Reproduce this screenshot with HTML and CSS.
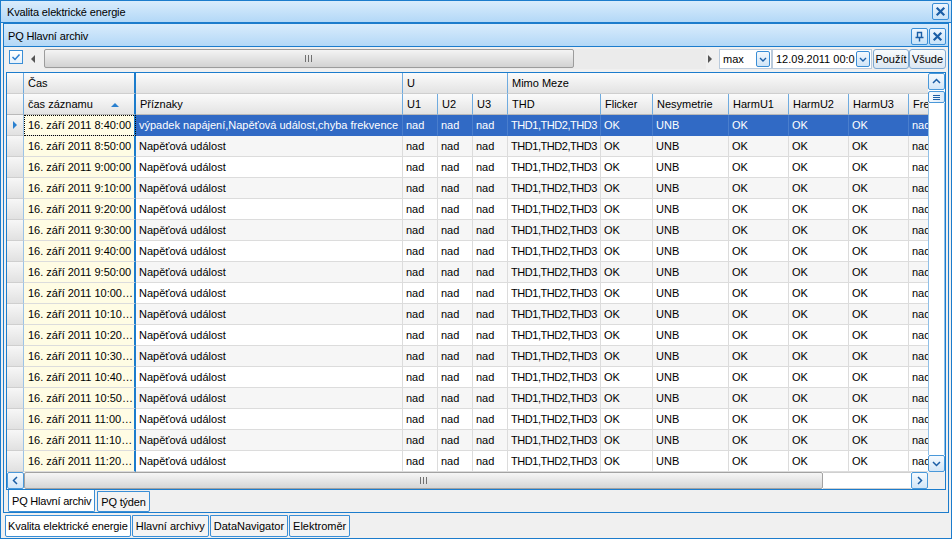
FILE: index.html
```html
<!DOCTYPE html>
<html lang="cs">
<head>
<meta charset="utf-8">
<title>Kvalita elektrické energie</title>
<link rel="stylesheet" href="styles.css">
</head>
<body>
<div class="app">
  <div class="titlebar">
    <span class="ttl">Kvalita elektrické energie</span>
    <span class="wbtn"><svg width="15" height="15" viewBox="0 0 15 15"><path d="M4.5 4.5l6 6M10.5 4.5l-6 6" stroke="#1b5ea6" stroke-width="2.2" stroke-linecap="square"/></svg></span>
  </div>
  <div class="win">
    <div class="wtitle">
      <span class="ttl">PQ Hlavní archiv</span>
      <span class="wbtns">
        <span class="wbtn"><svg width="15" height="15" viewBox="0 0 15 15"><path d="M5.5 3.5h4v5h-4z M3.5 8.5h8 M7.5 8.5v4" fill="none" stroke="#1b5ea6" stroke-width="1.4"/></svg></span>
        <span class="wbtn"><svg width="15" height="15" viewBox="0 0 15 15"><path d="M4.5 4.5l6 6M10.5 4.5l-6 6" stroke="#1b5ea6" stroke-width="2.2" stroke-linecap="square"/></svg></span>
      </span>
    </div>
    <div class="toolbar">
      <span class="chk"><svg width="12" height="12" viewBox="0 0 12 12"><path d="M2.5 6l2.5 2.5 4.5-5" fill="none" stroke="#2a7dd0" stroke-width="1.5"/></svg></span>
      <div class="tscroll">
        <span class="tarrow tl"></span>
        <div class="ttrack"><div class="tthumb"><span class="grip"></span></div></div>
        <span class="tarrow tr"></span>
      </div>
      <div class="combo c1"><span class="ctext">max</span><span class="cbtn"><svg width="12" height="13" viewBox="0 0 12 13"><path d="M3 5l3 3 3-3" fill="none" stroke="#1b5ea6" stroke-width="1.4"/></svg></span></div>
      <div class="combo c2"><span class="ctext">12.09.2011 00:0</span><span class="cbtn"><svg width="12" height="13" viewBox="0 0 12 13"><path d="M3 5l3 3 3-3" fill="none" stroke="#1b5ea6" stroke-width="1.4"/></svg></span></div>
      <span class="btn b1">Použít</span>
      <span class="btn b2">Všude</span>
    </div>
    <div class="grid">
      <div class="gbody">
        <div class="view">
          <div class="hrow h1">
            <div class="hc ind"></div>
            <div class="hc cas">Čas</div>
            <div class="hc"></div>
            <div class="hc s3">U</div>
            <div class="hc s7">Mimo Meze</div>
          </div>
          <div class="hrow h2">
            <div class="hc ind"></div>
            <div class="hc cas">čas záznamu<i class="sort"></i></div>
            <div class="hc">Příznaky</div>
            <div class="hc">U1</div>
            <div class="hc">U2</div>
            <div class="hc">U3</div>
            <div class="hc">THD</div>
            <div class="hc">Flicker</div>
            <div class="hc">Nesymetrie</div>
            <div class="hc">HarmU1</div>
            <div class="hc">HarmU2</div>
            <div class="hc">HarmU3</div>
            <div class="hc">Frekvence</div>
          </div>
          <div class="r sel"><div class="c ind"><i class="cur"></i></div><div class="c cas">16. září 2011 8:40:00</div><div class="c">výpadek napájení,Napěťová událost,chyba frekvence</div><div class="c">nad</div><div class="c">nad</div><div class="c">nad</div><div class="c thd">THD1,THD2,THD3</div><div class="c">OK</div><div class="c">UNB</div><div class="c">OK</div><div class="c">OK</div><div class="c">OK</div><div class="c">nad</div></div>
          <div class="r alt"><div class="c ind"></div><div class="c cas">16. září 2011 8:50:00</div><div class="c">Napěťová událost</div><div class="c">nad</div><div class="c">nad</div><div class="c">nad</div><div class="c thd">THD1,THD2,THD3</div><div class="c">OK</div><div class="c">UNB</div><div class="c">OK</div><div class="c">OK</div><div class="c">OK</div><div class="c">nad</div></div>
          <div class="r"><div class="c ind"></div><div class="c cas">16. září 2011 9:00:00</div><div class="c">Napěťová událost</div><div class="c">nad</div><div class="c">nad</div><div class="c">nad</div><div class="c thd">THD1,THD2,THD3</div><div class="c">OK</div><div class="c">UNB</div><div class="c">OK</div><div class="c">OK</div><div class="c">OK</div><div class="c">nad</div></div>
          <div class="r alt"><div class="c ind"></div><div class="c cas">16. září 2011 9:10:00</div><div class="c">Napěťová událost</div><div class="c">nad</div><div class="c">nad</div><div class="c">nad</div><div class="c thd">THD1,THD2,THD3</div><div class="c">OK</div><div class="c">UNB</div><div class="c">OK</div><div class="c">OK</div><div class="c">OK</div><div class="c">nad</div></div>
          <div class="r"><div class="c ind"></div><div class="c cas">16. září 2011 9:20:00</div><div class="c">Napěťová událost</div><div class="c">nad</div><div class="c">nad</div><div class="c">nad</div><div class="c thd">THD1,THD2,THD3</div><div class="c">OK</div><div class="c">UNB</div><div class="c">OK</div><div class="c">OK</div><div class="c">OK</div><div class="c">nad</div></div>
          <div class="r alt"><div class="c ind"></div><div class="c cas">16. září 2011 9:30:00</div><div class="c">Napěťová událost</div><div class="c">nad</div><div class="c">nad</div><div class="c">nad</div><div class="c thd">THD1,THD2,THD3</div><div class="c">OK</div><div class="c">UNB</div><div class="c">OK</div><div class="c">OK</div><div class="c">OK</div><div class="c">nad</div></div>
          <div class="r"><div class="c ind"></div><div class="c cas">16. září 2011 9:40:00</div><div class="c">Napěťová událost</div><div class="c">nad</div><div class="c">nad</div><div class="c">nad</div><div class="c thd">THD1,THD2,THD3</div><div class="c">OK</div><div class="c">UNB</div><div class="c">OK</div><div class="c">OK</div><div class="c">OK</div><div class="c">nad</div></div>
          <div class="r alt"><div class="c ind"></div><div class="c cas">16. září 2011 9:50:00</div><div class="c">Napěťová událost</div><div class="c">nad</div><div class="c">nad</div><div class="c">nad</div><div class="c thd">THD1,THD2,THD3</div><div class="c">OK</div><div class="c">UNB</div><div class="c">OK</div><div class="c">OK</div><div class="c">OK</div><div class="c">nad</div></div>
          <div class="r"><div class="c ind"></div><div class="c cas">16. září 2011 10:00:00</div><div class="c">Napěťová událost</div><div class="c">nad</div><div class="c">nad</div><div class="c">nad</div><div class="c thd">THD1,THD2,THD3</div><div class="c">OK</div><div class="c">UNB</div><div class="c">OK</div><div class="c">OK</div><div class="c">OK</div><div class="c">nad</div></div>
          <div class="r alt"><div class="c ind"></div><div class="c cas">16. září 2011 10:10:00</div><div class="c">Napěťová událost</div><div class="c">nad</div><div class="c">nad</div><div class="c">nad</div><div class="c thd">THD1,THD2,THD3</div><div class="c">OK</div><div class="c">UNB</div><div class="c">OK</div><div class="c">OK</div><div class="c">OK</div><div class="c">nad</div></div>
          <div class="r"><div class="c ind"></div><div class="c cas">16. září 2011 10:20:00</div><div class="c">Napěťová událost</div><div class="c">nad</div><div class="c">nad</div><div class="c">nad</div><div class="c thd">THD1,THD2,THD3</div><div class="c">OK</div><div class="c">UNB</div><div class="c">OK</div><div class="c">OK</div><div class="c">OK</div><div class="c">nad</div></div>
          <div class="r alt"><div class="c ind"></div><div class="c cas">16. září 2011 10:30:00</div><div class="c">Napěťová událost</div><div class="c">nad</div><div class="c">nad</div><div class="c">nad</div><div class="c thd">THD1,THD2,THD3</div><div class="c">OK</div><div class="c">UNB</div><div class="c">OK</div><div class="c">OK</div><div class="c">OK</div><div class="c">nad</div></div>
          <div class="r"><div class="c ind"></div><div class="c cas">16. září 2011 10:40:00</div><div class="c">Napěťová událost</div><div class="c">nad</div><div class="c">nad</div><div class="c">nad</div><div class="c thd">THD1,THD2,THD3</div><div class="c">OK</div><div class="c">UNB</div><div class="c">OK</div><div class="c">OK</div><div class="c">OK</div><div class="c">nad</div></div>
          <div class="r alt"><div class="c ind"></div><div class="c cas">16. září 2011 10:50:00</div><div class="c">Napěťová událost</div><div class="c">nad</div><div class="c">nad</div><div class="c">nad</div><div class="c thd">THD1,THD2,THD3</div><div class="c">OK</div><div class="c">UNB</div><div class="c">OK</div><div class="c">OK</div><div class="c">OK</div><div class="c">nad</div></div>
          <div class="r"><div class="c ind"></div><div class="c cas">16. září 2011 11:00:00</div><div class="c">Napěťová událost</div><div class="c">nad</div><div class="c">nad</div><div class="c">nad</div><div class="c thd">THD1,THD2,THD3</div><div class="c">OK</div><div class="c">UNB</div><div class="c">OK</div><div class="c">OK</div><div class="c">OK</div><div class="c">nad</div></div>
          <div class="r alt"><div class="c ind"></div><div class="c cas">16. září 2011 11:10:00</div><div class="c">Napěťová událost</div><div class="c">nad</div><div class="c">nad</div><div class="c">nad</div><div class="c thd">THD1,THD2,THD3</div><div class="c">OK</div><div class="c">UNB</div><div class="c">OK</div><div class="c">OK</div><div class="c">OK</div><div class="c">nad</div></div>
          <div class="r"><div class="c ind"></div><div class="c cas">16. září 2011 11:20:00</div><div class="c">Napěťová událost</div><div class="c">nad</div><div class="c">nad</div><div class="c">nad</div><div class="c thd">THD1,THD2,THD3</div><div class="c">OK</div><div class="c">UNB</div><div class="c">OK</div><div class="c">OK</div><div class="c">OK</div><div class="c">nad</div></div>
        </div>
        <div class="vscroll">
          <span class="sbtn"><svg width="13" height="13" viewBox="0 0 13 13"><path d="M3 8l3.5-3.5L10 8" fill="none" stroke="#1b5ea6" stroke-width="1.5"/></svg></span>
          <span class="vthumb"><svg width="13" height="9" viewBox="0 0 13 9"><path d="M3 2.5h7M3 4.5h7M3 6.5h7" stroke="#1b5ea6" stroke-width="1"/></svg></span>
          <span class="vtrack"></span>
          <span class="sbtn"><svg width="13" height="13" viewBox="0 0 13 13"><path d="M3 5l3.5 3.5L10 5" fill="none" stroke="#1b5ea6" stroke-width="1.5"/></svg></span>
        </div>
      </div>
      <div class="hscroll">
        <span class="sbtn"><svg width="13" height="13" viewBox="0 0 13 13"><path d="M8 3L4.5 6.5 8 10" fill="none" stroke="#1b5ea6" stroke-width="1.5"/></svg></span>
        <span class="hthumb"><span class="grip"></span></span>
        <span class="htrack"></span>
        <span class="sbtn"><svg width="13" height="13" viewBox="0 0 13 13"><path d="M5 3l3.5 3.5L5 10" fill="none" stroke="#1b5ea6" stroke-width="1.5"/></svg></span>
        <span class="corner"></span>
      </div>
    </div>
    <div class="tabs itabs">
      <span class="tab on">PQ Hlavní archiv</span>
      <span class="tab">PQ týden</span>
    </div>
  </div>
  <div class="tabs otabs">
    <span class="tab on">Kvalita elektrické energie</span>
    <span class="tab">Hlavní archivy</span>
    <span class="tab">DataNavigator</span>
    <span class="tab">Elektroměr</span>
  </div>
</div>
</body>
</html>
```

FILE: styles.css
```css
* { box-sizing: border-box; }
html, body { margin: 0; padding: 0; }
body {
  font-family: "Liberation Sans", Arial, sans-serif;
  font-size: 11px;
  color: #000;
  background: #f0f0f0;
}
.app {
  width: 952px;
  height: 539px;
  border: 1px solid #1c7ccc;
  background: #f0f0f0;
  display: flex;
  flex-direction: column;
  overflow: hidden;
}
.ttl { letter-spacing: -0.15px; }
.titlebar {
  flex: none;
  height: 22px;
  border-bottom: 1px solid #1c7ccc;
  background: linear-gradient(#d9ecfc, #b3d8f7);
  display: flex;
  align-items: center;
  justify-content: space-between;
  padding: 0 2px 0 6px;
}
.wbtn {
  width: 17px;
  height: 17px;
  border: 1px solid #3a8ed6;
  border-radius: 2px;
  background: linear-gradient(#eef6fe, #c7e2f8);
  display: flex;
  align-items: center;
  justify-content: center;
}
.win {
  flex: none;
  margin: 0 2px;
  border: 1px solid #1c7ccc;
  height: 490px;
  display: flex;
  flex-direction: column;
}
.wtitle {
  flex: none;
  height: 23px;
  border-bottom: 1px solid #1c7ccc;
  background: linear-gradient(#d9ecfc, #b3d8f7);
  display: flex;
  align-items: center;
  justify-content: space-between;
  padding: 2px 2px 0 4px;
}
.wbtns { display: flex; gap: 1px; align-self: flex-end; margin-bottom: 1px; }
.toolbar {
  flex: none;
  height: 24px;
  display: flex;
  align-items: flex-start;
  padding: 2px 0 0 5px;
}
.chk {
  width: 14px;
  height: 14px;
  margin-top: 1px;
  border: 1px solid #3a8ed6;
  background: linear-gradient(#ffffff, #e6f1fb);
  display: flex;
  align-items: center;
  justify-content: center;
}
.tscroll {
  width: 695px;
  height: 20px;
  display: flex;
}
.tarrow { position: relative; flex: none; }
.tarrow.tl { width: 21px; }
.tarrow.tr { width: 12px; }
.tarrow.tl::after, .tarrow.tr::after {
  content: "";
  position: absolute;
  top: 6px;
  border-top: 4px solid transparent;
  border-bottom: 4px solid transparent;
}
.tarrow.tl::after { left: 8px; border-right: 4px solid #555; }
.tarrow.tr::after { left: 2px; border-left: 4px solid #555; }
.ttrack { flex: 1; background: #ebebeb; display: flex; }
.tthumb {
  width: 530px;
  height: 19px;
  border: 1px solid #9c9c9c;
  border-radius: 2px;
  background: linear-gradient(#f4f4f4, #d2d2d2);
  display: flex;
  align-items: center;
  justify-content: center;
}
.grip {
  width: 8px;
  height: 7px;
  background: repeating-linear-gradient(90deg, #707070 0 1px, transparent 1px 3px);
}
.combo {
  height: 20px;
  border: 1px solid #b9cadc;
  background: #fff;
  display: flex;
  align-items: center;
  justify-content: space-between;
  padding-left: 3px;
  padding-right: 1px;
}
.c1 { width: 53px; margin-left: 1px; }
.c2 { width: 100px; }
.cbtn {
  width: 14px;
  height: 16px;
  border: 1px solid #3a8ed6;
  border-radius: 2px;
  background: linear-gradient(#f4f9fe, #cfe4f7);
  display: flex;
  align-items: center;
  justify-content: center;
}
.btn {
  height: 20px;
  border: 1px solid #7ea9d2;
  border-radius: 3px;
  background: linear-gradient(#f8fbfd, #dbe7f3);
  display: flex;
  align-items: center;
  justify-content: center;
}
.b1 { width: 36px; margin-left: 1px; }
.b2 { width: 37px; }

.grid {
  flex: none;
  margin: 1px 2px 0;
  border: 1px solid #1c7ccc;
  background: #fff;
  display: flex;
  flex-direction: column;
}
.gbody { display: flex; height: 399px; }
.view { width: 921px; overflow: hidden; }
.hrow, .r {
  display: grid;
  grid-template-columns: 17px 112px 267px 35px 35px 35px 93px 52px 76px 60px 60px 60px 60px;
  height: 21px;
}
.hc {
  background: linear-gradient(#fbfbfb, #e3e3e3);
  border-right: 1px solid #6fabdf;
  border-bottom: 1px solid #cfcfcf;
  padding: 1px 0 0 4px;
  line-height: 19px;
  white-space: nowrap;
  overflow: hidden;
  position: relative;
}
.hc.s3 { grid-column: span 3; }
.hc.s7 { grid-column: span 7; }
.h2 .hc { border-bottom-color: #b9b9b9; }
.hc.cas, .c.cas { border-right: 2px solid #1c7ccc; }
.sort {
  position: absolute;
  left: 87px;
  top: 9px;
  border-left: 4px solid transparent;
  border-right: 4px solid transparent;
  border-bottom: 4px solid #2a80cf;
}
.c {
  border-right: 1px solid #dcdcdc;
  border-bottom: 1px solid #dcdcdc;
  padding: 1px 0 0 3px;
  line-height: 19px;
  white-space: nowrap;
  overflow: hidden;
}
.c.thd { letter-spacing: -0.45px; }
.r.alt .c { background: #f6f6f6; }
.c.cas {
  background: #fffce4;
  padding-left: 4px;
  text-overflow: ellipsis;
}
.r.alt .c.cas { background: #fffce4; }
.c.ind, .r.alt .c.ind {
  background: linear-gradient(#f7f7f7, #e1e1e1);
  border-right: 1px solid #9cc3e6;
  border-bottom: 1px solid #cfcfcf;
  padding: 0;
  position: relative;
}
.cur {
  position: absolute;
  left: 6px;
  top: 6px;
  border-top: 4px solid transparent;
  border-bottom: 4px solid transparent;
  border-left: 4px solid #2a80cf;
}
.r.sel .c { background: #316ac5; color: #fff; border-color: #316ac5 #4a7ecd #316ac5 #316ac5; }
.r.sel .c.ind { background: linear-gradient(#f7f7f7, #e1e1e1); border-right-color: #9cc3e6; border-bottom-color: #cfcfcf; }
.r.sel .c.cas {
  background: #fffce4;
  color: #000;
  border-right-color: #1c7ccc;
  border-bottom-color: #dcdcdc;
  outline: 1px dotted #000;
  outline-offset: -1px;
}

.vscroll {
  width: 17px;
  display: flex;
  flex-direction: column;
  background: #fff;
}
.sbtn {
  flex: none;
  width: 17px;
  height: 17px;
  border: 1px solid #4a98d9;
  border-radius: 2px;
  background: linear-gradient(#f6fafe, #d3e6f7);
  display: flex;
  align-items: center;
  justify-content: center;
}
.vthumb {
  flex: none;
  height: 12px;
  margin-top: 1px;
  border: 1px solid #4a98d9;
  border-radius: 2px;
  background: linear-gradient(90deg, #f6fafe, #d9e9f8);
  display: flex;
  align-items: center;
  justify-content: center;
}
.vtrack {
  flex: 1;
  border-left: 1px solid #8fc0e8;
  border-right: 1px solid #8fc0e8;
  background: #fff;
}
.hscroll { display: flex; height: 17px; background: #fff; }
.hthumb {
  width: 799px;
  border: 1px solid #a2a2a2;
  border-radius: 2px;
  background: linear-gradient(#f6f6f6, #d6d6d6);
  display: flex;
  align-items: center;
  justify-content: center;
}
.htrack {
  width: 88px;
  border-top: 1px solid #d0d0d0;
  border-bottom: 1px solid #d0d0d0;
  background: #fff;
}
.corner { width: 17px; background: #f0f0f0; }

.tabs { display: flex; flex: none; }
.itabs { height: 23px; padding-left: 4px; gap: 2px; }
.tab {
  height: 21px;
  padding: 0 3px;
  border: 1px solid #3a8ed6;
  border-radius: 0 0 2px 2px;
  background: #f3f3f3;
  display: flex;
  align-items: center;
}
.itabs .tab { margin-top: 1px; letter-spacing: -0.2px; }
.itabs .tab.on { margin-top: 0; height: 22px; border-top: none; background: #fff; }
.otabs { height: 24px; padding: 2px 0 0 4px; gap: 1px; }
.otabs .tab { height: 22px; }
.otabs .tab.on { padding: 0 2px; letter-spacing: -0.1px; }
.tab.on { background: #fff; }
```
